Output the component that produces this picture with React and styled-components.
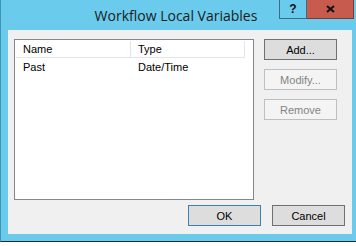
import React from "react";
import styled, { createGlobalStyle } from "styled-components";

const GlobalStyle = createGlobalStyle`
  body {
    margin: 0;
    background: #fff;
    font-family: "Liberation Sans", Arial, sans-serif;
  }
`;

const Window = styled.div`
  width: 344px;
  height: 241px;
  background: #6bcbec;
  border-left: 1px solid #3e97b8;
  border-right: 1px solid #1c2f37;
  border-bottom: 1px solid #1c2f37;
  padding: 0 7px 0 7px;
  box-sizing: content-box;
  box-shadow: 2px 2px 2px rgba(0, 0, 0, 0.45);
  display: flex;
  flex-direction: column;
`;

const TitleBar = styled.div`
  height: 30px;
  display: flex;
  align-items: flex-start;
`;

const Title = styled.div`
  flex: 1;
  text-align: center;
  padding-top: 6px;
  padding-left: 65px;
  font-family: "Open Sans", "Liberation Sans", sans-serif;
  font-size: 14px;
  color: #1b1b1b;
`;

const Caption = styled.div`
  display: flex;
  margin-right: -2px;
`;

const CaptionButton = styled.div`
  height: 19px;
  width: ${(p) => p.$w}px;
  box-sizing: border-box;
  border: 1px solid ${(p) => (p.$close ? "#7a3b34" : "#3a6f82")};
  border-top: none;
  border-left-width: ${(p) => (p.$close ? 0 : 1)}px;
  background: ${(p) => (p.$close ? "#c75b4e" : "transparent")};
  display: flex;
  align-items: center;
  justify-content: center;
  font-weight: bold;
  font-size: 12px;
  color: #111;
`;

const Client = styled.div`
  background: #f0f0f0;
  height: 204px;
  box-sizing: border-box;
  padding: 9px 7px 8px 6px;
  display: flex;
  flex-direction: column;
  gap: 5px;
`;

const TopRow = styled.div`
  display: flex;
  gap: 10px;
  height: 161px;
`;

const ListView = styled.div`
  width: 240px;
  height: 161px;
  box-sizing: border-box;
  border: 1px solid #828790;
  background: #fff;
  padding: 1px 0 0 1px;
  font-size: 11px;
  color: #000;
`;

const Header = styled.div`
  display: flex;
  width: 228px;
  height: 16px;
  border-bottom: 1px solid #e5e5e5;
  border-right: 1px solid #e5e5e5;
`;

const HeaderCell = styled.div`
  width: ${(p) => p.$w}px;
  box-sizing: border-box;
  padding-left: 7px;
  line-height: 16px;
  border-right: ${(p) => (p.$last ? "none" : "1px solid #e5e5e5")};
`;

const Row = styled.div`
  display: flex;
  height: 18px;
  align-items: center;
`;

const Cell = styled.div`
  width: ${(p) => p.$w}px;
  box-sizing: border-box;
  padding-left: 7px;
`;

const ButtonColumn = styled.div`
  display: flex;
  flex-direction: column;
  gap: 9px;
`;

const Button = styled.div`
  width: 73px;
  height: 21px;
  box-sizing: border-box;
  border: 1px solid
    ${(p) => (p.$default ? "#3c7fb1" : p.$disabled ? "#bfbfbf" : "#707070")};
  background: ${(p) => (p.$disabled ? "#f4f4f4" : "#dddddd")};
  color: ${(p) => (p.$disabled ? "#838383" : "#000")};
  font-size: 11px;
  display: flex;
  align-items: center;
  justify-content: center;
`;

const BottomRow = styled.div`
  display: flex;
  justify-content: flex-end;
  gap: 11px;
`;

function CloseGlyph() {
  return (
    <svg width="9" height="8" viewBox="0 0 9 8">
      <path d="M1 1 L8 7 M8 1 L1 7" stroke="#111" strokeWidth="2" />
    </svg>
  );
}

export default function App() {
  return (
    <>
      <GlobalStyle />
      <Window>
        <TitleBar>
          <Title>Workflow Local Variables</Title>
          <Caption>
            <CaptionButton $w={28}>?</CaptionButton>
            <CaptionButton $w={47} $close>
              <CloseGlyph />
            </CaptionButton>
          </Caption>
        </TitleBar>
        <Client>
          <TopRow>
            <ListView>
              <Header>
                <HeaderCell $w={115}>Name</HeaderCell>
                <HeaderCell $w={113} $last>Type</HeaderCell>
              </Header>
              <Row>
                <Cell $w={115}>Past</Cell>
                <Cell $w={113}>Date/Time</Cell>
              </Row>
            </ListView>
            <ButtonColumn>
              <Button>Add...</Button>
              <Button $disabled>Modify...</Button>
              <Button $disabled>Remove</Button>
            </ButtonColumn>
          </TopRow>
          <BottomRow>
            <Button $default>OK</Button>
            <Button>Cancel</Button>
          </BottomRow>
        </Client>
      </Window>
    </>
  );
}
